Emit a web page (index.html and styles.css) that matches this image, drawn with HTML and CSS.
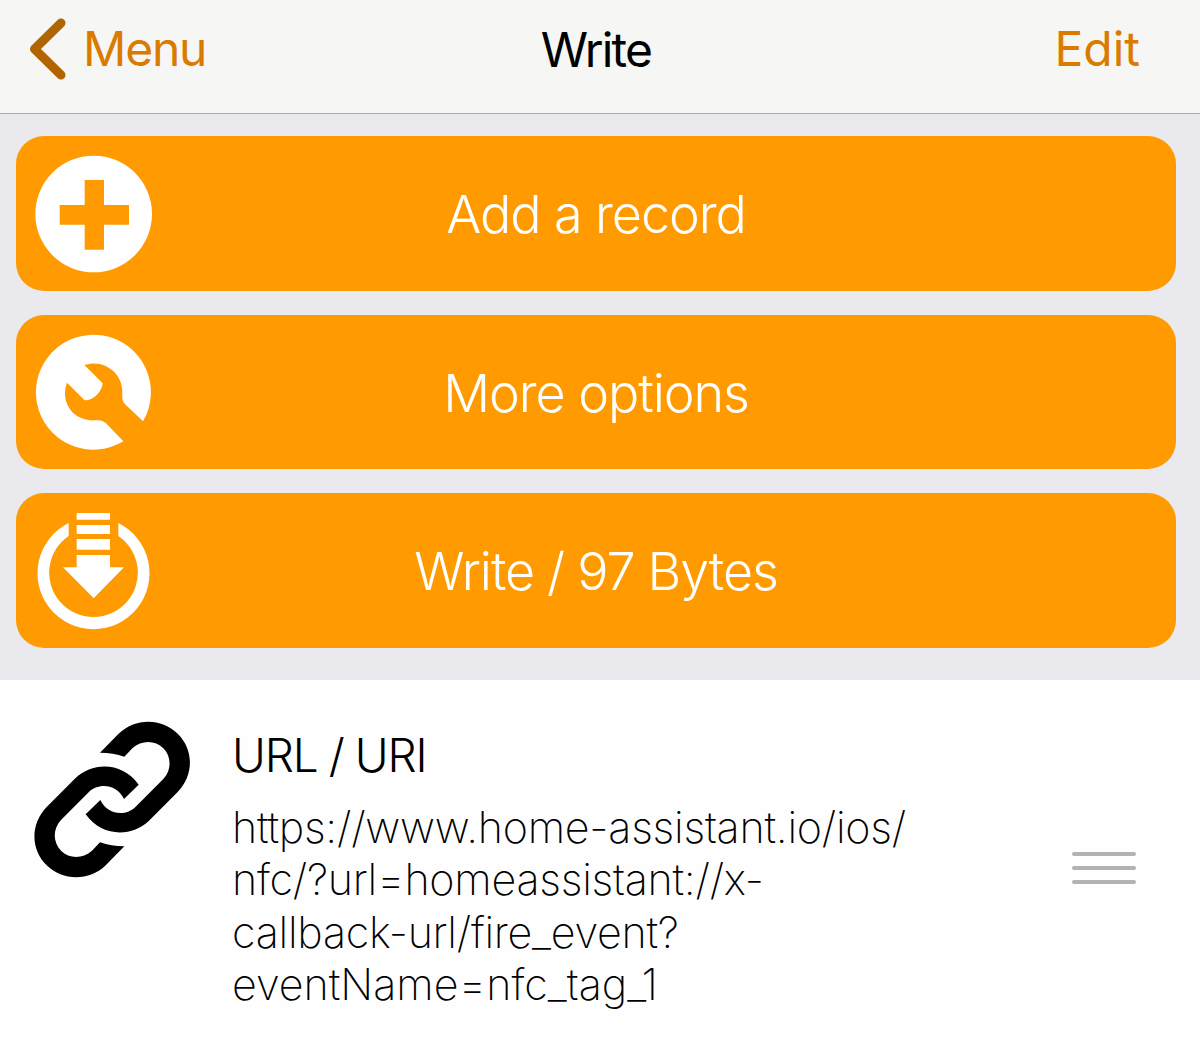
FILE: index.html
```html
<!DOCTYPE html>
<html lang="en">
<head>
<meta charset="utf-8">
<title>Write</title>
<link rel="stylesheet" href="styles.css">
</head>
<body>
<header class="navbar">
  <a class="back">
    <svg class="chevron" viewBox="0 0 40 64" aria-hidden="true"><path d="M33 6 6.500 32 33 58"/></svg>
    <span class="back-label">Menu</span>
  </a>
  <h1 class="title">Write</h1>
  <a class="edit">Edit</a>
</header>
<main>
  <section class="actions">
    <button class="action">
      <svg class="icon" viewBox="72 72 360 360" aria-hidden="true">
        <path fill-rule="evenodd" d="M251 77a175 175 0 1 1 0 350a175 175 0 1 1 0-350ZM224 150V225H149V284H224V359H282V284H357V225H282V150Z"/>
      </svg>
      <span class="label label-add">Add a record</span>
    </button>
    <button class="action action-options">
      <svg class="icon" viewBox="72 66 360 360" aria-hidden="true">
        <path d="M399 334A172.500 172.500 0 1 0 340 394L294 346Q280 329 258 331C200 335 165 295 165 250Q165 232 171 218L223 270C248 275 277 244 278 220L223 165C283 145 337 190 337 244C336 267 337 274 347 284Z"/>
      </svg>
      <span class="label label-options">More options</span>
    </button>
    <button class="action">
      <svg class="icon" viewBox="72 75 360 360" aria-hidden="true">
        <path d="M200 84H300V104H200ZM200 120H300V147H200ZM200 162H300V194H200ZM200 210H300V247H342L251 340L159 247H200Z"/>
        <path d="M176 114V153A133 133 0 1 0 325 153V114A168 168 0 1 1 176 114Z"/>
      </svg>
      <span class="label label-write">Write / 97 Bytes</span>
    </button>
  </section>
  <section class="record">
    <svg class="link-icon" viewBox="42 33 471 471" aria-hidden="true">
      <path id="link-half" d="M240 128 295 72C345 23 424 23 473 71C522 119 522 195 473 246L387 332C335 382 246 382 197 313L241 270C262 315 318 320 347 290L430 207C455 180 455 140 430 115C405 90 365 90 337 115L313 140Q280 128 240 128Z"/>
      <use href="#link-half" transform="rotate(180 276.500 268.500)"/>
    </svg>
    <div class="details">
      <h2 class="name">URL / URI</h2>
      <p class="value">
        <span class="line line-1">https://www.home-assistant.io/ios/</span>
        <span class="line line-2">nfc/?url=homeassistant://x-</span>
        <span class="line line-3">callback-url/fire_event?</span>
        <span class="line line-4">eventName=nfc_tag_1</span>
      </p>
    </div>
    <div class="handle"><i></i><i></i><i></i></div>
  </section>
</main>
</body>
</html>
```
FILE: styles.css
```css
* { box-sizing: border-box; }
body {
  margin: 0;
  min-height: 1054px;
  background: #fefefe;
  color: #000;
  font-family: Inter, "Liberation Sans", sans-serif;
}
.navbar {
  display: grid;
  grid-template-columns: 400px 1fr 400px;
  height: 114px;
  padding: 0 60px 0 28px;
  background: #f6f6f5;
  border-bottom: 1px solid #a9aaa9;
  font-size: 48px;
  line-height: 58px;
}
.back { display: flex; color: #da7b00; }
.chevron { width: 40px; height: 64px; margin-top: 17px; }
.chevron path {
  fill: none;
  stroke: #b16500;
  stroke-width: 9;
  stroke-linecap: round;
  stroke-linejoin: round;
}
.back-label { margin: 20px 0 0 15px; letter-spacing: -1.2px; }
.title {
  margin: 21px 0 0;
  padding-left: 24px;
  font-size: 48px;
  font-weight: 400;
  letter-spacing: -1.800px;
  text-align: center;
}
.edit { margin-top: 20px; text-align: right; color: #da7b00; }
.actions {
  display: flex;
  flex-direction: column;
  gap: 23.4px;
  height: 566px;
  padding: 22px 23.7px 0 15.7px;
  background: #eae9ee;
}
.action {
  display: grid;
  grid-template-columns: 120px 1fr 120px;
  align-items: center;
  flex: none;
  width: 100%;
  height: 155.4px;
  padding: 0 18px;
  border: 0;
  border-radius: 28px;
  background: #ff9b00;
  color: #fff;
  font: 300 52px/62px Inter, "Liberation Sans", sans-serif;
}
.action-options { height: 154.600px; }
.icon { width: 120px; height: 120px; fill: #fff; }
.label {
  padding-top: 4px;
  text-align: center;
  white-space: nowrap;
  letter-spacing: -1.050px;
}
.label-add { padding-top: 2px; }
.label-write { word-spacing: -0.500px; }
.record {
  display: grid;
  grid-template-columns: 157px 1fr 64px;
  column-gap: 41px;
  height: 374px;
  padding: 0 64px 0 34px;
}
.link-icon { width: 157px; height: 157px; margin-top: 41px; }
.name {
  margin: 47px 0 0;
  font-size: 46px;
  font-weight: 300;
  line-height: 56px;
  letter-spacing: -1.100px;
  word-spacing: -0.800px;
}
.value {
  margin: 18px 0 0;
  font-size: 43px;
  font-weight: 200;
  line-height: 52.250px;
  letter-spacing: -0.250px;
}
.line { display: block; white-space: nowrap; }
.line-4 { letter-spacing: 0; }
.handle {
  display: flex;
  flex-direction: column;
  gap: 10px;
  margin-top: 172px;
}
.handle i { height: 4px; border-radius: 2px; background: #b3b3b4; }
```
